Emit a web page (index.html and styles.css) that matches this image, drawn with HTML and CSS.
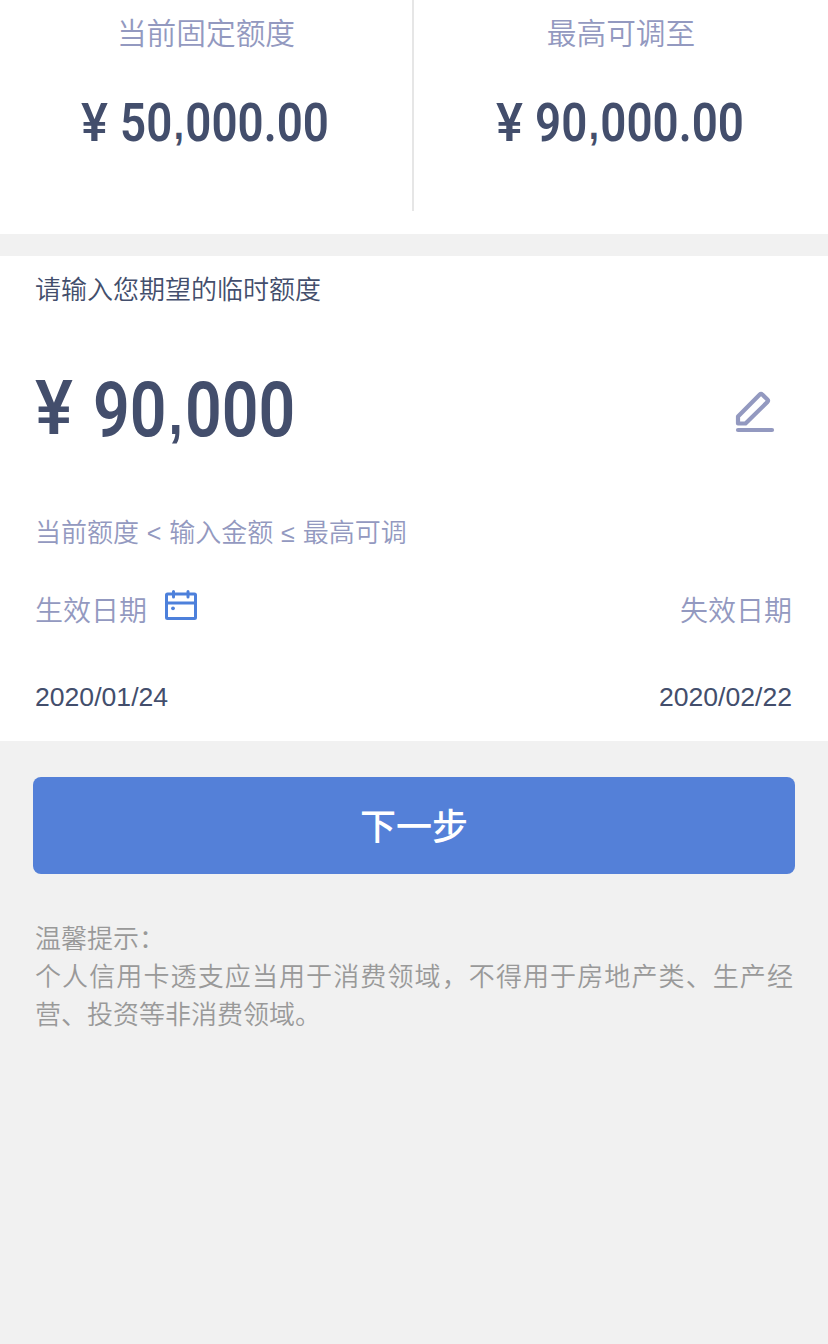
FILE: index.html
```html
<!DOCTYPE html>
<html lang="zh-CN">
  <head>
    <meta charset="UTF-8" />
    <meta name="viewport" content="width=device-width, initial-scale=1.0" />
    <title>临时额度</title>
    <link rel="stylesheet" href="styles.css">
  </head>
  <body>
    <div class="summary">
      <div class="summary-item">
        <div class="summary-label">当前固定额度</div>
        <div class="summary-value">
          <span class="yen">¥</span>
          <span class="number">50<i>,</i>000.00</span>
        </div>
      </div>
      <div class="summary-item">
        <div class="summary-label">最高可调至</div>
        <div class="summary-value">
          <span class="yen">¥</span>
          <span class="number">90<i>,</i>000.00</span>
        </div>
      </div>
    </div>

    <div class="form">
      <div class="form-title">请输入您期望的临时额度</div>
      <div class="amount">
        <div class="amount-value">
          <span class="yen">¥</span>
          <span class="number">90<i>,</i>000</span>
        </div>
        <svg class="icon-edit" viewBox="0 0 42 44">
          <path d="M4 33.5V26.5L25.8 4.6Q27 3.4 28.3 4.6L33.4 9.6Q34.6 10.8 33.4 12L11.5 33.5Z" />
          <path d="M4 40H38" />
        </svg>
      </div>
      <div class="rule">当前额度 <span class="sign">&lt;</span> 输入金额 <span class="sign">≤</span> 最高可调</div>
      <div class="date-labels">
        <div class="date-start">
          生效日期
          <svg class="icon-calendar" viewBox="0 0 34 32">
            <rect x="2.5" y="5" width="29" height="24.5" rx="1" />
            <path d="M2.5 14H31.5M9.5 2.5V8M24 2.5V8" />
            <circle cx="9" cy="19.3" r="1.9" />
          </svg>
        </div>
        <div>失效日期</div>
      </div>
      <div class="dates">
        <div>2020/01/24</div>
        <div>2020/02/22</div>
      </div>
    </div>

    <button class="next">下一步</button>

    <div class="tips">
      <div>温馨提示：</div>
      <p>个人信用卡透支应当用于消费领域，不得用于房地产类、生产经营、投资等非消费领域。</p>
    </div>
  </body>
</html>
```

FILE: styles.css
```css
:root {
  --dark: #434e6c;
  --light: #9399c0;
  --blue: #5480d8;
}
* {
  box-sizing: border-box;
}
body {
  margin: 0;
  min-height: 100vh;
  background: #f1f1f1;
  color: var(--dark);
  font-family: "Liberation Sans", "Noto Sans CJK SC", sans-serif;
}

.summary {
  display: flex;
  height: 234px;
  background: #fff;
}
.summary-item {
  width: 414px;
  height: 211px;
}
.summary-item:first-child {
  border-right: 2px solid #e6e6e6;
}
.summary-label {
  height: 66px;
  line-height: 68px;
  text-align: center;
  font-size: 29.7px;
  font-weight: 350;
  color: var(--light);
}
.summary-value {
  display: flex;
  padding: 25px 0 0 81px;
  font-family: Roboto, sans-serif;
  font-size: 54px;
  font-weight: 600;
  line-height: 64px;
}
.summary-item:last-child .summary-value {
  padding-left: 82px;
}

/* narrow digits */
.number {
  transform: scaleX(0.847);
  transform-origin: left;
}
.number i {
  padding: 0 0.04em;
  font-family: "Liberation Sans", sans-serif;
  font-size: 0.8em;
  font-style: normal;
  font-weight: bold;
  line-height: 1;
  vertical-align: 0.04em;
}
.yen {
  transform: scaleX(0.94);
  transform-origin: left;
}
.summary-value .yen {
  width: 39px;
  font-weight: 500;
}

.form {
  height: 485px;
  margin-top: 22px;
  padding: 0 36px 0 35px;
  background: #fff;
}
.form-title {
  height: 66px;
  line-height: 68px;
  font-size: 26px;
  font-weight: 350;
}
.amount {
  display: flex;
  justify-content: space-between;
  height: 171px;
  padding-right: 16px;
}
.amount-value {
  display: flex;
  padding-top: 43px;
  font-family: Roboto, sans-serif;
  font-size: 76px;
  font-weight: 600;
  line-height: 90px;
}
.amount-value .yen {
  width: 58px;
  margin-top: -2px;
  font-weight: 500;
}
.icon-edit {
  width: 42px;
  height: 44px;
  margin-top: 68px;
  fill: none;
  stroke: var(--light);
  stroke-width: 4.2;
  stroke-linecap: round;
  stroke-linejoin: round;
}
.rule {
  height: 78px;
  line-height: 80px;
  font-size: 26px;
  font-weight: 350;
  word-spacing: 0.6px;
  color: var(--light);
}
.rule .sign {
  font-size: 25px;
}
.date-labels {
  display: flex;
  justify-content: space-between;
  height: 76px;
  line-height: 81px;
  font-size: 28px;
  font-weight: 350;
  color: var(--light);
}
.date-start {
  display: flex;
}
.icon-calendar {
  width: 34px;
  height: 32px;
  margin: 18px 0 0 17px;
  fill: none;
  stroke: #4d80db;
  stroke-width: 3;
  stroke-linecap: round;
}
.icon-calendar circle {
  fill: #4d80db;
  stroke: none;
}
.dates {
  display: flex;
  justify-content: space-between;
  line-height: 100px;
  font-size: 26.6px;
}

.next {
  display: block;
  width: 762px;
  height: 97px;
  margin: 36px 0 0 33px;
  padding: 0 0 4px;
  border: 0;
  border-radius: 8px;
  background: var(--blue);
  color: #fff;
  font-family: "Noto Sans CJK SC", sans-serif;
  font-size: 36px;
  font-weight: 500;
}
.tips {
  margin: 46px 35px 0;
  color: #999;
  font-size: 26px;
  font-weight: 350;
  line-height: 38px;
}
.tips p {
  margin: 0;
  text-align: justify;
}
```
